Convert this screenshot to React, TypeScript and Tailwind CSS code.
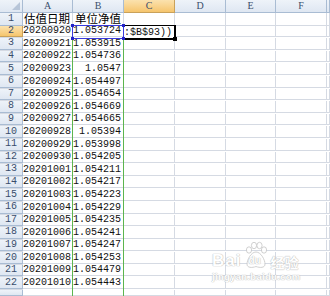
import React from "react";

const rows: [string, string][] = [
  ["20200920", "1.053724"],
  ["20200921", "1.053915"],
  ["20200922", "1.054736"],
  ["20200923", "1.0547"],
  ["20200924", "1.054497"],
  ["20200925", "1.054654"],
  ["20200926", "1.054669"],
  ["20200927", "1.054665"],
  ["20200928", "1.05394"],
  ["20200929", "1.053998"],
  ["20200930", "1.054205"],
  ["20201001", "1.054211"],
  ["20201002", "1.054217"],
  ["20201003", "1.054223"],
  ["20201004", "1.054229"],
  ["20201005", "1.054235"],
  ["20201006", "1.054241"],
  ["20201007", "1.054247"],
  ["20201008", "1.054253"],
  ["20201009", "1.054479"],
  ["20201010", "1.054443"],
];

const cols = "grid grid-cols-[23px_50px_51px_51px_51px_50px_51px_1fr]";
const mono = "font-['Liberation_Mono',monospace] text-[10px] text-[#111]";
const cjk = "font-['Noto_Sans_CJK_SC','Noto_Sans',sans-serif] text-[11.5px] text-black";
const cell = "border-r border-b border-[#d5dae3] bg-white overflow-hidden flex items-end leading-[11px]";
const cellVis = "border-r border-b border-[#d5dae3] bg-white flex items-center leading-none";
const hdr =
  "border-r border-b border-[#a9bcd3] bg-gradient-to-b from-[#eef3f9] to-[#dfe7f2] flex items-center justify-center text-[#3a4e6c] leading-none";
const hdrSel =
  "border-r border-b border-[#c9a15a] bg-gradient-to-b from-[#fbe2ae] to-[#f6c56c] flex items-center justify-center text-[#3a4e6c] leading-none";
const rowNum = "font-['Liberation_Mono',monospace] text-[10px]";
const colLetter = "font-['Liberation_Serif',serif] text-[10px]";

function Empty() {
  return (
    <>
      <div className={cell} />
      <div className={cell} />
      <div className={cell} />
      <div className={cell} />
      <div className={cell} />
    </>
  );
}

export default function App() {
  return (
    <div className="relative w-[330px] h-[296px] overflow-hidden bg-white">
      {/* column header row */}
      <div className={`${cols} h-[13px]`}>
        <div className="relative border-r border-b border-[#a9bcd3] bg-gradient-to-b from-[#eef3f9] to-[#dfe7f2]">
          <div className="absolute right-[2px] bottom-[2px] w-0 h-0 border-l-[8px] border-l-transparent border-b-[8px] border-b-[#b7c5d8]" />
        </div>
        <div className={`${hdr} ${colLetter}`}>A</div>
        <div className={`${hdr} ${colLetter}`}>B</div>
        <div className={`${hdrSel} ${colLetter}`}>C</div>
        <div className={`${hdr} ${colLetter}`}>D</div>
        <div className={`${hdr} ${colLetter}`}>E</div>
        <div className={`${hdr} ${colLetter}`}>F</div>
        <div className={hdr} />
      </div>

      {/* row 1 */}
      <div className={`${cols} h-[12.6px]`}>
        <div className={`${hdr} ${rowNum}`}>1</div>
        <div className={`${cellVis} ${cjk} pl-[1px] whitespace-nowrap`}>估值日期</div>
        <div className={`${cellVis} ${cjk} pl-[2px] whitespace-nowrap`}>单位净值</div>
        <div className={cell} />
        <Empty />
      </div>

      {rows.map(([d, v], i) => (
        <div key={d} className={`${cols} h-[12.6px]`}>
          <div className={`${i === 0 ? hdrSel : hdr} ${rowNum}`}>{i + 2}</div>
          <div className={`${cell} ${mono} justify-end pr-[1px]`}>{d}</div>
          <div className={`${cell} ${mono} justify-end pr-[2px]`}>{v}</div>
          <div className={cell} />
          <Empty />
        </div>
      ))}

      {/* row 23 partial */}
      <div className={`${cols} h-[12.6px]`}>
        <div className={hdr} />
        <div className={cell} />
        <div className={cell} />
        <div className={cell} />
        <Empty />
      </div>

      {/* green reference border around column B */}
      <div className="absolute left-[72px] top-[25px] w-[52px] h-[280px] border-x border-[#5cb54e]" />

      {/* active cell C2 (editing) */}
      <div className="absolute left-[123px] top-[25px] w-[53px] h-[15px] border border-r-2 border-b-2 border-black bg-white overflow-hidden flex items-end justify-end pr-[2px]">
        <span className={`${mono} leading-[11px] whitespace-nowrap`}>2:$B$93))</span>
      </div>
      <div className="absolute left-[173px] top-[37px] w-[4px] h-[4px] bg-black" />

      {/* blue reference box B2 */}
      <div className="absolute left-[72px] top-[25px] w-[52px] h-[14px] border border-[#3a3ae0]" />
      <div className="absolute left-[71px] top-[24px] w-[3px] h-[3px] bg-[#2323c8]" />
      <div className="absolute left-[71px] top-[37px] w-[3px] h-[3px] bg-[#2323c8]" />
      <div className="absolute left-[122px] top-[24px] w-[3px] h-[3px] bg-[#2323c8]" />
      <div className="absolute left-[122px] top-[37px] w-[3px] h-[3px] bg-[#2323c8]" />

      {/* watermark */}
      <div className="absolute left-[212px] top-[240px] w-[95px] h-[45px] text-white font-['Liberation_Sans',sans-serif] pointer-events-none opacity-90">
        <div className="flex items-end h-[29px]">
          <span className="text-[17px] font-bold leading-none tracking-[1px] [text-shadow:0_0_1px_#b0b0b0,0_0_1px_#b0b0b0]">Bai</span>
          <div className="relative w-[26px] h-[28px] ml-[2px]">
            <svg width="26" height="28" viewBox="0 0 26 28" className="absolute left-0 top-0">
              <g fill="#ffffff" stroke="#c0c0c0" strokeWidth="0.8">
                <ellipse cx="6" cy="9" rx="2.6" ry="3.2" />
                <ellipse cx="11" cy="4.5" rx="2.6" ry="3.2" />
                <ellipse cx="16.5" cy="4.5" rx="2.6" ry="3.2" />
                <ellipse cx="21" cy="9" rx="2.6" ry="3.2" />
                <path d="M13 11 C8 11 4 19 4 23 C4 27 9 27 13 25.5 C17 27 22 27 22 23 C22 19 18 11 13 11 Z" />
              </g>
            </svg>
            <span className="absolute left-[5px] top-[15px] text-[10px] font-bold leading-none [text-shadow:0_0_1px_#b0b0b0,0_0_1px_#b0b0b0]">du</span>
          </div>
          <span className="ml-[1px] text-[14px] font-bold leading-none font-['Noto_Sans_CJK_SC',sans-serif] [text-shadow:0_0_1px_#b0b0b0,0_0_1px_#b0b0b0]">经验</span>
        </div>
        <div className="mt-[3px] text-[9.5px] font-bold leading-none tracking-[0.3px] [text-shadow:0_0_1px_#b0b0b0,0_0_1px_#b0b0b0]">jingyan.baidu.com</div>
      </div>
    </div>
  );
}
